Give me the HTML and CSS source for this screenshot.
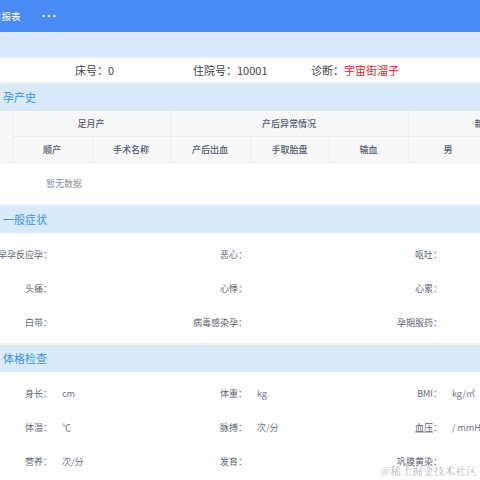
FILE: index.html
```html
<!DOCTYPE html>
<html lang="zh">
<head>
<meta charset="utf-8">
<link rel="stylesheet" href="styles.css">
</head>
<body>
<div class="page">
  <nav class="topbar">
    <span class="nav-item cut">月报表</span>
    <svg class="nav-more" width="14" height="4" viewBox="0 0 14 4" aria-label="更多"><circle cx="1.6" cy="2" r="1.3"/><circle cx="7" cy="2" r="1.3"/><circle cx="12.4" cy="2" r="1.3"/></svg>
  </nav>
  <div class="subbar"></div>
  <div class="info">
    <span class="info-item">床号：0</span>
    <span class="info-item">住院号：10001</span>
    <span class="info-item">诊断：<em class="diag">宇宙街溜子</em></span>
  </div>

  <section class="block">
    <h2 class="sec-head">孕产史</h2>
    <table class="grid-table">
      <colgroup>
        <col class="c0"><col class="c80"><col class="c78"><col class="c80"><col class="c79"><col class="c79"><col class="c80"><col class="c80">
      </colgroup>
      <thead>
        <tr>
          <th rowspan="2"></th>
          <th colspan="2">足月产</th>
          <th colspan="3">产后异常情况</th>
          <th colspan="2">新生儿</th>
        </tr>
        <tr>
          <th>顺产</th>
          <th>手术名称</th>
          <th>产后出血</th>
          <th>手取胎盘</th>
          <th>输血</th>
          <th>男</th>
          <th>女</th>
        </tr>
      </thead>
    </table>
    <div class="empty">暂无数据</div>
  </section>

  <section class="block">
    <h2 class="sec-head">一般症状</h2>
    <div class="form">
      <div class="field"><span class="lbl">早孕反应孕：</span></div>
      <div class="field"><span class="lbl">恶心：</span></div>
      <div class="field"><span class="lbl">呕吐：</span></div>
      <div class="field"><span class="lbl">头痛：</span></div>
      <div class="field"><span class="lbl">心悸：</span></div>
      <div class="field"><span class="lbl">心累：</span></div>
      <div class="field"><span class="lbl">白带：</span></div>
      <div class="field"><span class="lbl">病毒感染孕：</span></div>
      <div class="field"><span class="lbl">孕期服药：</span></div>
    </div>
  </section>

  <section class="block">
    <h2 class="sec-head">体格检查</h2>
    <div class="form">
      <div class="field"><span class="lbl">身长：</span><span class="val">cm</span></div>
      <div class="field"><span class="lbl">体重：</span><span class="val">kg</span></div>
      <div class="field"><span class="lbl">BMI：</span><span class="val">kg/㎡</span></div>
      <div class="field"><span class="lbl">体温：</span><span class="val">℃</span></div>
      <div class="field"><span class="lbl">脉搏：</span><span class="val">次/分</span></div>
      <div class="field"><span class="lbl"><abbr class="ul">血压</abbr>：</span><span class="val">/ mmHg</span></div>
      <div class="field"><span class="lbl">营养：</span><span class="val">次/分</span></div>
      <div class="field"><span class="lbl">发育：</span></div>
      <div class="field"><span class="lbl">巩膜黄染：</span></div>
    </div>
  </section>
  <div class="watermark">@稀土掘金技术社区</div>
</div>
</body>
</html>
```

FILE: styles.css
```css
html, body {
  margin: 0;
  padding: 0;
  width: 480px;
  height: 480px;
  overflow: hidden;
  background: #eef0f3;
}
.page {
  position: relative;
  width: 480px;
  height: 480px;
  overflow: hidden;
  font-family: "Noto Sans CJK SC", "Noto Sans", sans-serif;
  display: flex;
  flex-direction: column;
  gap: 2px;
}
.topbar {
  height: 32px;
  flex: none;
  background: #4a8af3;
  display: flex;
  align-items: center;
  gap: 21px;
  color: #fff;
  font-size: 9.5px;
  margin-bottom: -2px;
}
.nav-item.cut {
  margin-left: -8px;
}
.nav-more {
  fill: #dfeaff;
  flex: none;
}
.subbar {
  height: 26px;
  flex: none;
  background: #dce9fb;
  margin-bottom: -2px;
}
.info {
  height: 24px;
  flex: none;
  background: #fff;
  display: flex;
  align-items: center;
  padding-left: 75px;
  font-size: 11px;
  color: #444;
}
.info-item {
  width: 118px;
  white-space: nowrap;
}
.diag {
  font-style: normal;
  color: #d0262e;
}
.block {
  background: #fff;
  flex: none;
}
.sec-head {
  margin: 0;
  height: 27px;
  line-height: 27px;
  background: #d8eafb;
  color: #3f92df;
  font-size: 11px;
  font-weight: normal;
  padding-left: 3px;
}
.grid-table {
  border-collapse: collapse;
  table-layout: fixed;
  width: 568px;
  font-size: 9px;
  color: #515a6e;
}
.c0 { width: 12px; }
.c78 { width: 78px; }
.c79 { width: 79px; }
.c80 { width: 80px; }
.grid-table th {
  background: #f8f8f9;
  border: 1px solid #ecedef;
  border-top: none;
  height: 25px;
  padding: 0;
  font-weight: 500;
  text-align: center;
  white-space: nowrap;
}
.grid-table th:first-child {
  border-left: none;
}
.empty {
  height: 41px;
  line-height: 41px;
  padding-left: 46px;
  font-size: 9px;
  color: #8a8f99;
}
.form {
  display: grid;
  grid-template-columns: repeat(3, 195px);
  grid-auto-rows: 34px;
  padding: 4px 0 4px;
}
.field {
  display: flex;
  align-items: center;
  font-size: 9px;
  color: #5f6470;
  white-space: nowrap;
}
.lbl {
  width: 52px;
  flex: none;
  display: flex;
  justify-content: flex-end;
}
.val {
  margin-left: 10px;
  color: #707580;
}
.ul {
  text-decoration: underline;
  text-decoration-color: #b9bcc2;
}
.watermark {
  position: absolute;
  right: 3px;
  bottom: 2px;
  font-family: "Noto Serif CJK SC", "Liberation Serif", serif;
  font-size: 10.5px;
  color: #b4b6ba;
  letter-spacing: 0.3px;
}
```
